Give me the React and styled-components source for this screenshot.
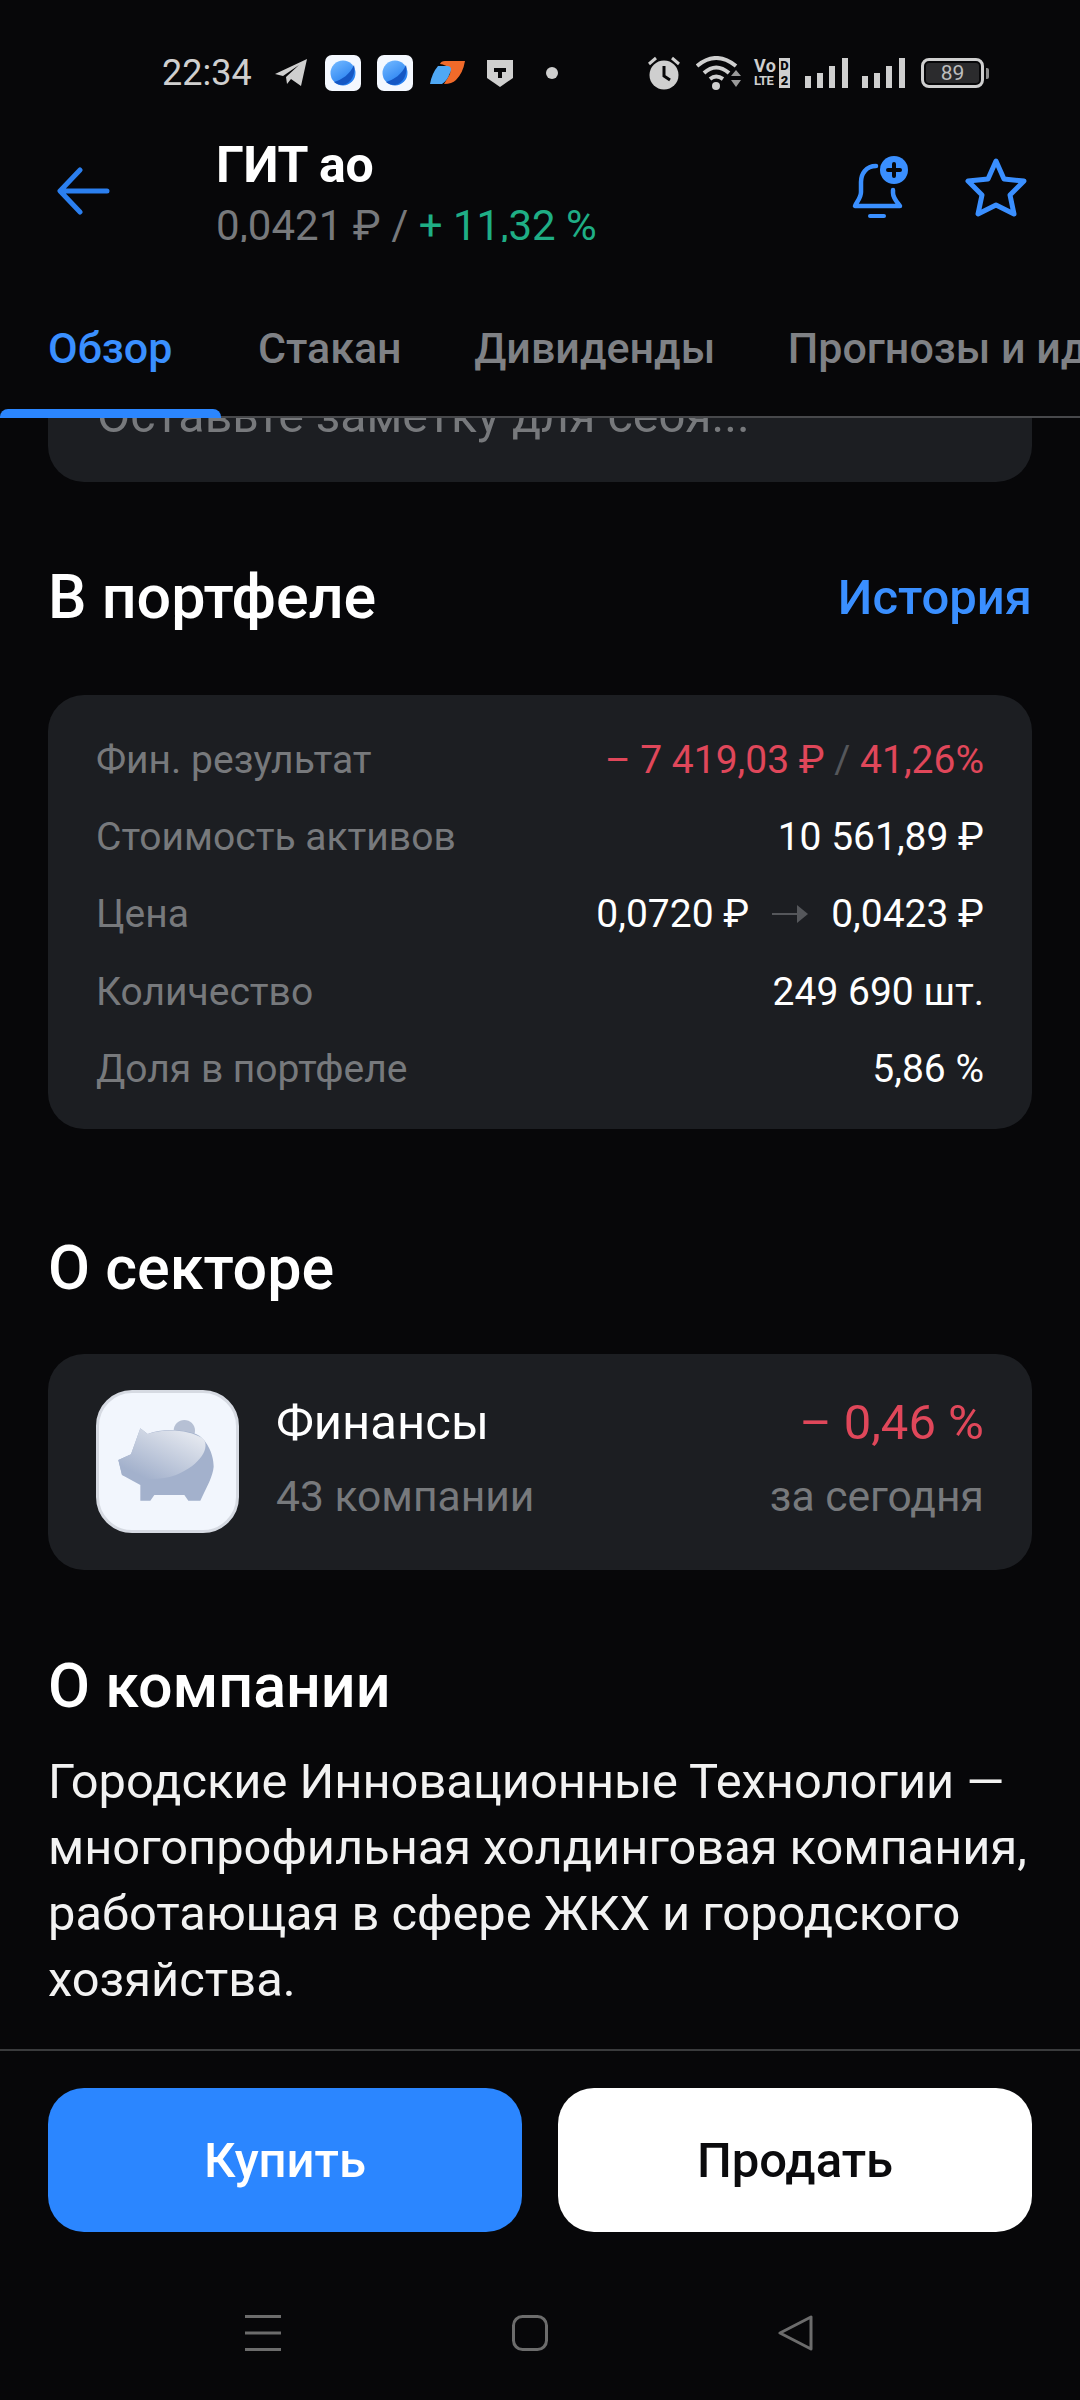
import React from "react";
import styled, { createGlobalStyle } from "styled-components";

const GlobalStyle = createGlobalStyle`
  html, body {
    margin: 0;
    padding: 0;
    background: #070709;
    font-family: Roboto, "Noto Sans", sans-serif;
  }
  * { box-sizing: border-box; }
`;

const Page = styled.div`
  width: 1080px;
  height: 2400px;
  background: #070709;
  display: flex;
  flex-direction: column;
  overflow: hidden;
  color: #fff;
`;

/* status bar */
const StatusBar = styled.div`
  height: 140px;
  flex: none;
  padding: 54px 96px 0 162px;
  display: flex;
  align-items: flex-start;
  justify-content: space-between;
`;

const StatusGroup = styled.div`
  display: flex;
  align-items: center;
  height: 38px;
`;

const Clock = styled.span`
  font-size: 36px;
  color: #cfcfcf;
  width: 87px;
`;

const Gap = styled.span`
  width: ${(p) => p.$w}px;
  flex: none;
`;

const Battery = styled.div`
  width: 63px;
  height: 30px;
  border: 3px solid #cfcfcf;
  border-radius: 8px;
  position: relative;
  display: flex;
  align-items: center;
  padding: 2px;
  &::after {
    content: "";
    position: absolute;
    right: -8px;
    top: 7px;
    width: 3px;
    height: 11px;
    background: #8d8d8d;
    border-radius: 0 2px 2px 0;
  }
`;

const BatteryFill = styled.div`
  flex: 1;
  height: 100%;
  background: #2b2b2d;
  border-radius: 3px;
  color: #bdbdbd;
  font-size: 21px;
  line-height: 20px;
  text-align: center;
`;

const TinyLabel = styled.div`
  display: grid;
  grid-template-columns: 25px 11px;
  grid-auto-rows: 15px;
  font-weight: 700;
  line-height: 15px;
  color: #cfcfcf;
  width: 36px;
  b {
    background: #cfcfcf;
    color: #070709;
    text-align: center;
    font-size: 13px;
  }
`;

const TinyText = styled.span`
  white-space: nowrap;
  font-size: ${(p) => (p.$small ? 13 : 18)}px;
  letter-spacing: ${(p) => (p.$small ? -0.6 : 0.5)}px;
`;

/* header */
const Header = styled.header`
  height: 102px;
  flex: none;
  display: flex;
  align-items: flex-start;
  padding-left: 57px;
`;

const BackButton = styled.div`
  width: 54px;
  height: 48px;
  margin-top: 27px;
  margin-right: 105px;
`;

const TitleBlock = styled.div`
  flex: 1;
  display: flex;
  flex-direction: column;
`;

const Title = styled.div`
  font-size: 50px;
  line-height: 50px;
  font-weight: 700;
  letter-spacing: -0.3px;
`;

const SubTitle = styled.div`
  font-size: 42px;
  line-height: 44px;
  margin-top: 14px;
  color: #77797c;
  span { color: #1fae85; }
`;

const HeaderActions = styled.div`
  display: flex;
  gap: 57px;
  padding: 16px 53px 0 0;
  align-items: flex-end;
`;

/* tabs */
const TabsWrap = styled.div`
  flex: none;
  height: 176px;
  position: relative;
  z-index: 2;
  background: #070709;
  border-bottom: 2px solid #47484b;
  &::after {
    content: "";
    position: absolute;
    left: 0;
    bottom: -2px;
    width: 221px;
    height: 9px;
    background: #2b86ff;
    border-radius: 8px 8px 0 0;
  }
`;

const TabsBar = styled.nav`
  height: 100%;
  display: flex;
  align-items: flex-start;
  overflow: hidden;
  padding-left: 48px;
  gap: 72.5px;
`;

const Tab = styled.div`
  font-size: 43px;
  line-height: 50px;
  padding-top: 81px;
  font-weight: 500;
  white-space: nowrap;
  margin-right: ${(p) => (p.$active ? 13 : 0)}px;
  color: ${(p) => (p.$active ? "#3a8fff" : "#7f8185")};
`;

/* scroll area */
const Content = styled.main`
  flex: 1;
  min-height: 0;
  overflow: hidden;
  padding: 0 48px;
`;

const NoteCard = styled.div`
  height: 64px;
  background: #1c1e22;
  border-radius: 0 0 36px 36px;
  padding-left: 49px;
  font-size: 48.3px;
  line-height: 48px;
  color: #77797c;
  overflow: hidden;
`;

const NoteText = styled.div`
  margin-top: -26px;
`;

const SectionHead = styled.div`
  display: flex;
  align-items: center;
  justify-content: space-between;
  margin-top: ${(p) => p.$top}px;
  height: 60px;
`;

const SectionTitle = styled.h2`
  margin: 0;
  font-size: 61px;
  line-height: 60px;
  font-weight: 500;
`;

const HistoryLink = styled.span`
  font-size: 49px;
  font-weight: 500;
  color: #3a8fff;
`;

const PortfolioCard = styled.section`
  background: #1c1e22;
  border-radius: 36px;
  margin-top: 68px;
  padding: 26px 48px 22px;
`;

const Row = styled.div`
  display: flex;
  justify-content: space-between;
  align-items: center;
  height: 77.3px;
  font-size: 39px;
`;

const RowLabel = styled.span`
  color: #77797c;
`;

const RowValue = styled.span`
  display: flex;
  align-items: center;
  white-space: pre;
  color: ${(p) => p.$color || "#fff"};
  em { font-style: normal; color: #55575b; }
`;

const PriceArrow = styled.svg`
  margin: 0 23px;
`;

const SectorCard = styled.section`
  background: #1c1e22;
  border-radius: 36px;
  margin-top: 56px;
  height: 216px;
  padding: 36px 48px 0;
  display: flex;
`;

const SectorIcon = styled.div`
  width: 143px;
  height: 143px;
  flex: none;
  background: #f2f6fd;
  border: 3px solid #d6dae2;
  border-radius: 36px;
  margin-right: 37px;
`;

const SectorMain = styled.div`
  flex: 1;
  display: flex;
  flex-direction: column;
`;

const SectorSide = styled(SectorMain)`
  flex: none;
  align-items: flex-end;
`;

const SectorName = styled.div`
  font-size: 49px;
  line-height: 60px;
  margin-top: 3px;
  color: ${(p) => p.$color || "#fff"};
`;

const SectorNote = styled.div`
  font-size: 42.6px;
  line-height: 50px;
  margin-top: 18px;
  color: #77797c;
`;

const About = styled.p`
  margin: 33px 0 0;
  font-size: 48.8px;
  line-height: 66px;
  color: #f2f2f2;
`;

/* bottom */
const ActionBar = styled.div`
  height: 181px;
  flex: none;
  border-top: 2px solid #3a3b3d;
  padding: 37px 48px 0;
  display: flex;
  gap: 36px;
`;

const ActionButton = styled.div`
  flex: 1;
  height: 144px;
  border-radius: 36px;
  display: flex;
  align-items: center;
  justify-content: center;
  font-size: 49px;
  font-weight: 500;
  background: ${(p) => (p.$primary ? "#2b86ff" : "#fff")};
  color: ${(p) => (p.$primary ? "#fff" : "#0b0b0d")};
`;

const NavBar = styled.div`
  height: 170px;
  flex: none;
  display: flex;
  align-items: flex-start;
  padding: 85px 266px 0 245px;
  justify-content: space-between;
`;

const rows = [
  { label: "Стоимость активов", value: "10 561,89 ₽" },
  { label: "Количество", value: "249 690 шт." },
  { label: "Доля в портфеле", value: "5,86 %" },
];

function BrowserIcon({ id }) {
  return (
    <svg width="36" height="36" viewBox="0 0 36 36">
      <defs>
        <linearGradient id={id} x1="0.2" y1="0" x2="0.8" y2="1">
          <stop offset="0" stopColor="#6fb6ff" />
          <stop offset="1" stopColor="#1c78ee" />
        </linearGradient>
      </defs>
      <rect width="36" height="36" rx="7" fill="#f4f8ff" />
      <circle cx="18" cy="18" r="12.5" fill={`url(#${id})`} />
      <path d="M9 27 C17 25 25 19 29 10 C31 18 27 28 18 30 C14 30 11 29 9 27Z" fill="#1557c4" />
    </svg>
  );
}

function PigIcon() {
  return (
    <svg width="137" height="137" viewBox="9 9 411 411">
      <defs>
        <linearGradient id="pigTop" x1="0.15" y1="0.85" x2="0.8" y2="0.1">
          <stop offset="0" stopColor="#a3b1cc" />
          <stop offset="1" stopColor="#e2e6ee" />
        </linearGradient>
      </defs>
      <circle cx="265" cy="122" r="32" fill="#b6c0d4" />
      <path d="M133 115 L155 132 C190 118 250 115 300 132 C330 145 353 190 353 230 C350 260 335 285 313 332 L277 332 L265 315 L175 315 L163 332 L133 332 L133 285 L78 255 L67 210 L105 193 Z" fill="#a3b1cc" />
      <path d="M133 115 L155 132 C200 115 280 118 320 145 C345 170 315 225 240 255 C200 270 140 272 78 255 L67 210 L105 193 Z" fill="url(#pigTop)" />
    </svg>
  );
}

export default function App() {
  return (
    <>
      <GlobalStyle />
      <Page>
        <StatusBar>
          <StatusGroup>
            <Clock>22:34</Clock>
            <Gap $w={26} />
            <svg width="32" height="28" viewBox="0 0 32 28">
              <path d="M0 15 L32 0 L26 27 L16 20 L12 25 L11 18 L24 6 L8 17 Z" fill="#cfcfcf" />
            </svg>
            <Gap $w={18} />
            <BrowserIcon id="br1" />
            <Gap $w={16} />
            <BrowserIcon id="br2" />
            <Gap $w={17} />
            <svg width="36" height="24" viewBox="0 0 36 24">
              <path d="M10 3 Q11 0 15 0 L35 0 Q33 12 26 19 Q22 23 14 23 L20 13 Q22 5 10 3Z" fill="#f06a2a" />
              <path d="M8 5 L18 5 Q23 6 20 12 Q17 20 12 23 L0 23 Q2 12 8 5Z" fill="#4fa8f5" />
            </svg>
            <Gap $w={21} />
            <svg width="26" height="27" viewBox="0 0 26 27">
              <path d="M0 0 H26 V18 L13 27 L0 18 Z" fill="#cfcfcf" />
              <path d="M7 8 H19 V12 H15 V18 H11 V12 H7 Z" fill="#070709" />
            </svg>
            <Gap $w={33} />
            <svg width="12" height="12" viewBox="0 0 12 12">
              <circle cx="6" cy="6" r="6" fill="#cfcfcf" />
            </svg>
          </StatusGroup>
          <StatusGroup>
            <svg width="32" height="34" viewBox="0 0 32 34">
              <circle cx="16" cy="19" r="14.5" fill="#cfcfcf" />
              <path d="M16 10 V20 L22 24" stroke="#070709" strokeWidth="3" fill="none" />
              <path d="M1 8 L8 2 M31 8 L24 2" stroke="#cfcfcf" strokeWidth="3" />
            </svg>
            <Gap $w={16} />
            <svg width="45" height="34" viewBox="0 0 45 34">
              <path d="M1 10 Q20 -6 40 10" stroke="#cfcfcf" strokeWidth="4" fill="none" />
              <path d="M8 17 Q20 6 33 17" stroke="#cfcfcf" strokeWidth="4" fill="none" />
              <path d="M14 23 Q20 18 27 23" stroke="#cfcfcf" strokeWidth="4" fill="none" />
              <circle cx="20" cy="30" r="4" fill="#cfcfcf" />
              <path d="M35 20 H45 L40 14 Z M35 24 H45 L40 31 Z" fill="#9a9a9a" />
            </svg>
            <Gap $w={13} />
            <TinyLabel>
              <TinyText>Vo</TinyText>
              <b>D</b>
              <TinyText $small>LTE</TinyText>
              <b>2</b>
            </TinyLabel>
            <Gap $w={15} />
            <svg width="43" height="30" viewBox="0 0 43 30">
              <path d="M0 18 H6 V30 H0Z M12 15 H18 V30 H12Z M24 8 H30 V30 H24Z M37 0 H43 V30 H37Z" fill="#cfcfcf" />
            </svg>
            <Gap $w={14} />
            <svg width="43" height="30" viewBox="0 0 43 30">
              <path d="M0 18 H6 V30 H0Z M12 15 H18 V30 H12Z M24 8 H30 V30 H24Z M37 0 H43 V30 H37Z" fill="#cfcfcf" />
            </svg>
            <Gap $w={16} />
            <Battery>
              <BatteryFill>89</BatteryFill>
            </Battery>
          </StatusGroup>
        </StatusBar>

        <Header>
          <BackButton>
            <svg width="54" height="48" viewBox="0 0 54 48" fill="none">
              <path d="M50 24 H4 M23 3 L3 24 L23 45" stroke="#2b7fef" strokeWidth="5" strokeLinecap="round" strokeLinejoin="round" />
            </svg>
          </BackButton>
          <TitleBlock>
            <Title>ГИТ ао</Title>
            <SubTitle>
              0,0421 ₽ / <span>+ 11,32 %</span>
            </SubTitle>
          </TitleBlock>
          <HeaderActions>
            <svg width="56" height="62" viewBox="0 0 56 62" fill="none">
              <path d="M24 10 C14 10 9 18 9 26 V36 C9 42 5 45 3 50 H48 C45 46 41 42 41 37 V34" stroke="#3a8fff" strokeWidth="4.5" strokeLinecap="round" strokeLinejoin="round" />
              <path d="M18 60 H32" stroke="#3a8fff" strokeWidth="4" strokeLinecap="round" />
              <circle cx="42" cy="14" r="14" fill="#3a8fff" />
              <path d="M42 8 V20 M36 14 H48" stroke="#070709" strokeWidth="4" strokeLinecap="round" />
            </svg>
            <svg width="62" height="60" viewBox="0 0 62 60" fill="none">
              <path d="M31 3 L39 21 L59 23 L45 37 L49 56 L31 47 L13 56 L17 37 L3 23 L23 21 Z" stroke="#3a8fff" strokeWidth="5" strokeLinejoin="round" />
            </svg>
          </HeaderActions>
        </Header>

        <TabsWrap>
          <TabsBar>
            <Tab $active>Обзор</Tab>
            <Tab>Стакан</Tab>
            <Tab>Дивиденды</Tab>
            <Tab>Прогнозы и идеи</Tab>
          </TabsBar>
        </TabsWrap>

        <Content>
          <NoteCard>
            <NoteText>Оставьте заметку для себя...</NoteText>
          </NoteCard>
          <SectionHead $top={85}>
            <SectionTitle>В портфеле</SectionTitle>
            <HistoryLink>История</HistoryLink>
          </SectionHead>
          <PortfolioCard>
            <Row>
              <RowLabel>Фин. результат</RowLabel>
              <RowValue $color="#e0475a">
                – 7 419,03 ₽ <em>/</em> 41,26%
              </RowValue>
            </Row>
            <Row>
              <RowLabel>{rows[0].label}</RowLabel>
              <RowValue>{rows[0].value}</RowValue>
            </Row>
            <Row>
              <RowLabel>Цена</RowLabel>
              <RowValue>
                0,0720 ₽
                <PriceArrow width="36" height="18" viewBox="0 0 36 18">
                  <path d="M0 9 H26" stroke="#55575b" strokeWidth="2" />
                  <path d="M25 0 L36 9 L25 18 Z" fill="#55575b" />
                </PriceArrow>
                0,0423 ₽
              </RowValue>
            </Row>
            <Row>
              <RowLabel>{rows[1].label}</RowLabel>
              <RowValue>{rows[1].value}</RowValue>
            </Row>
            <Row>
              <RowLabel>{rows[2].label}</RowLabel>
              <RowValue>{rows[2].value}</RowValue>
            </Row>
          </PortfolioCard>

          <SectionHead $top={109}>
            <SectionTitle>О секторе</SectionTitle>
          </SectionHead>
          <SectorCard>
            <SectorIcon>
              <PigIcon />
            </SectorIcon>
            <SectorMain>
              <SectorName>Финансы</SectorName>
              <SectorNote>43 компании</SectorNote>
            </SectorMain>
            <SectorSide>
              <SectorName $color="#e0475a">– 0,46 %</SectorName>
              <SectorNote>за сегодня</SectorNote>
            </SectorSide>
          </SectorCard>

          <SectionHead $top={86}>
            <SectionTitle>О компании</SectionTitle>
          </SectionHead>
          <About>
            Городские Инновационные Технологии — многопрофильная холдинговая
            компания, работающая в сфере ЖКХ и городского хозяйства.
          </About>
        </Content>

        <ActionBar>
          <ActionButton $primary>Купить</ActionButton>
          <ActionButton>Продать</ActionButton>
        </ActionBar>

        <NavBar>
          <svg width="36" height="36" viewBox="0 0 36 36">
            <path d="M0 1.5 H36 M0 18 H36 M0 34.5 H36" stroke="#6c6c6c" strokeWidth="3" />
          </svg>
          <svg width="36" height="36" viewBox="0 0 36 36" fill="none">
            <rect x="1.5" y="1.5" width="33" height="33" rx="9" stroke="#6c6c6c" strokeWidth="3" />
          </svg>
          <svg width="36" height="36" viewBox="0 0 36 36" fill="none">
            <path d="M2 18 L33 2 V34 Z" stroke="#6c6c6c" strokeWidth="3" strokeLinejoin="round" />
          </svg>
        </NavBar>
      </Page>
    </>
  );
}
